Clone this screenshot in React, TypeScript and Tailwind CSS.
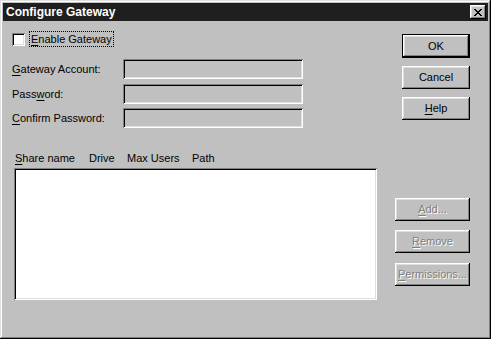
import React from "react";

const raised =
  "bg-[#c0c0c0] shadow-[inset_-1px_-1px_#000,inset_1px_1px_#fff,inset_-2px_-2px_#808080,inset_2px_2px_#dfdfdf]";
const sunken =
  "shadow-[inset_1px_1px_#808080,inset_-1px_-1px_#fff,inset_2px_2px_#000,inset_-2px_-2px_#dfdfdf]";

const Key = ({ children }: { children: React.ReactNode }) => (
  <span className="underline underline-offset-2">{children}</span>
);

const Button = ({
  children,
  disabled,
  isDefault,
  width = "w-[68px]",
}: {
  children: React.ReactNode;
  disabled?: boolean;
  isDefault?: boolean;
  width?: string;
}) => (
  <div
    className={`${width} ${isDefault ? "h-[24px] border border-black" : "h-[23px]"} flex`}
  >
    <div
      className={`${raised} flex-1 flex items-center justify-center ${
        disabled ? "text-[#808080] [text-shadow:1px_1px_0_#fff]" : "text-black"
      }`}
    >
      {children}
    </div>
  </div>
);

const FieldRow = ({ label }: { label: React.ReactNode }) => (
  <div className="flex items-center h-[20px]">
    <div className="w-[111px]">{label}</div>
    <div className={`w-[180px] h-[20px] bg-[#c0c0c0] ${sunken}`} />
  </div>
);

export default function App() {
  return (
    <div
      className="w-[491px] h-[339px] bg-[#c0c0c0] p-[3px] flex flex-col text-[11px] leading-[13px] text-black whitespace-nowrap shadow-[inset_-1px_-1px_#000,inset_1px_1px_#dfdfdf,inset_-2px_-2px_#808080,inset_2px_2px_#fff]"
      style={{ fontFamily: '"Liberation Sans", Arial, sans-serif' }}
    >
      {/* title bar */}
      <div className="h-[18px] bg-[#1f1f1f] flex items-center justify-between pl-[3px] pr-[2px]">
        <span className="text-white font-bold text-[12px]">Configure Gateway</span>
        <div className={`${raised} w-[16px] h-[14px] flex items-center justify-center`}>
          <svg width="8" height="7" viewBox="0 0 8 7" shapeRendering="crispEdges">
            <path
              d="M0 0h2v1h-2zM6 0h2v1h-2zM1 1h2v1h-2zM5 1h2v1h-2zM2 2h4v1h-4zM3 3h2v1h-2zM2 4h4v1h-4zM1 5h2v1h-2zM5 5h2v1h-2zM0 6h2v1h-2zM6 6h2v1h-2z"
              fill="#000"
            />
          </svg>
        </div>
      </div>

      {/* top section */}
      <div className="flex">
        <div className="pl-[9px] w-[300px] flex flex-col">
          <div className="mt-[10px] flex items-start h-[16px]">
            <div className={`mt-[2px] w-[13px] h-[13px] bg-white ${sunken}`} />
            <div className="ml-[4px] h-[16px] border border-dotted border-black px-[1px] flex items-center">
              <span>
                <Key>E</Key>nable Gateway
              </span>
            </div>
          </div>
          <div className="mt-[12px]">
            <FieldRow
              label={
                <>
                  <Key>G</Key>ateway Account:
                </>
              }
            />
          </div>
          <div className="mt-[5px]">
            <FieldRow
              label={
                <>
                  Pass<Key>w</Key>ord:
                </>
              }
            />
          </div>
          <div className="mt-[4px]">
            <FieldRow
              label={
                <>
                  <Key>C</Key>onfirm Password:
                </>
              }
            />
          </div>
        </div>
        <div className="ml-[99px] mt-[13px] flex flex-col gap-[8px]">
          <Button isDefault>OK</Button>
          <Button>Cancel</Button>
          <Button>
            <span>
              <Key>H</Key>elp
            </span>
          </Button>
        </div>
      </div>

      {/* share list section */}
      <div className="flex mt-[24px]">
        <div className="pl-[11px] flex flex-col">
          <div className="flex h-[13px] pl-[1px]">
            <div className="w-[74px]">
              <Key>S</Key>hare name
            </div>
            <div className="w-[38px]">Drive</div>
            <div className="w-[65px]">Max Users</div>
            <div>Path</div>
          </div>
          <div className={`mt-[3px] w-[363px] h-[132px] bg-white ${sunken}`} />
        </div>
        <div className="ml-[18px] mt-[46px] flex flex-col">
          <Button disabled width="w-[75px]">
            <span>
              <Key>A</Key>dd...
            </span>
          </Button>
          <div className="mt-[9px]">
            <Button disabled width="w-[75px]">
              <span>
                <Key>R</Key>emove
              </span>
            </Button>
          </div>
          <div className="mt-[10px]">
            <Button disabled width="w-[75px]">
              <span>
                <Key>P</Key>ermissions...
              </span>
            </Button>
          </div>
        </div>
      </div>
    </div>
  );
}
